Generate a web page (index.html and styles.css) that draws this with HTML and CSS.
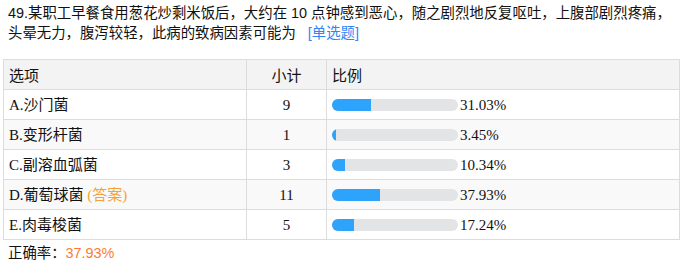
FILE: index.html
```html
<!DOCTYPE html>
<html lang="zh-CN">
<head>
<meta charset="utf-8">
<link rel="stylesheet" href="styles.css">
</head>
<body>
<div class="question">
  <p class="title">49.某职工早餐食用葱花炒剩米饭后，大约在 10 点钟感到恶心，随之剧烈地反复呕吐，上腹部剧烈疼痛，头晕无力，腹泻较轻，此病的致病因素可能为<span class="qtype">[单选题]</span></p>
  <table class="stats">
    <thead>
      <tr><th class="c-opt">选项</th><th class="c-cnt">小计</th><th class="c-pct">比例</th></tr>
    </thead>
    <tbody>
      <tr><td class="c-opt">A.沙门菌</td><td class="c-cnt">9</td><td class="c-pct"><div class="cell"><div class="bar"><div class="fill" style="width:31.03%"></div></div><span class="pct">31.03%</span></div></td></tr>
      <tr><td class="c-opt">B.变形杆菌</td><td class="c-cnt">1</td><td class="c-pct"><div class="cell"><div class="bar"><div class="fill" style="width:3.45%"></div></div><span class="pct">3.45%</span></div></td></tr>
      <tr><td class="c-opt">C.副溶血弧菌</td><td class="c-cnt">3</td><td class="c-pct"><div class="cell"><div class="bar"><div class="fill" style="width:10.34%"></div></div><span class="pct">10.34%</span></div></td></tr>
      <tr><td class="c-opt">D.葡萄球菌 <span class="answer">(答案)</span></td><td class="c-cnt">11</td><td class="c-pct"><div class="cell"><div class="bar"><div class="fill" style="width:37.93%"></div></div><span class="pct">37.93%</span></div></td></tr>
      <tr><td class="c-opt">E.肉毒梭菌</td><td class="c-cnt">5</td><td class="c-pct"><div class="cell"><div class="bar"><div class="fill" style="width:17.24%"></div></div><span class="pct">17.24%</span></div></td></tr>
    </tbody>
  </table>
  <div class="rate">正确率：<span class="rate-val">37.93%</span></div>
</div>
</body>
</html>
```
FILE: styles.css
```css
html, body {
  margin: 0;
  padding: 0;
  background: #fff;
}
body {
  padding: 3px 5px 0 3px;
  color: #111;
}
.title {
  margin: 0;
  font-family: "Liberation Sans", "Noto Sans CJK SC", sans-serif;
  font-size: 14.4px;
  line-height: 20px;
  padding: 0 0 0 5px;
}
.qtype {
  color: #2f86f4;
  margin-left: 12px;
}
.stats {
  margin-top: 16px;
  width: 677px;
  border-collapse: collapse;
  font-family: "Liberation Serif", "Noto Sans CJK SC", serif;
  font-size: 15px;
  table-layout: fixed;
}
.stats th, .stats td {
  border: 1px solid #dcdcdc;
  height: 29px;
  padding: 0 5px;
  font-weight: normal;
  text-align: left;
  line-height: 18px;
}
.stats thead th {
  background: #f3f3f3;
  font-family: "Noto Sans CJK SC", sans-serif;
}
.stats tbody tr:nth-child(even) td {
  background: #f9f9f9;
}
.stats .c-opt { width: 232px; }
.stats .c-cnt { width: 69px; text-align: center; }
.stats .c-pct { padding-left: 5px; }
.cell {
  display: flex;
  align-items: center;
}
.bar {
  width: 126px;
  height: 12px;
  border-radius: 6px;
  background: #e3e4e6;
  overflow: hidden;
  flex: none;
}
.fill {
  height: 100%;
  background: #2ea3fb;
}
.pct {
  margin-left: 2px;
}
.answer {
  color: #f3a23a;
}
.rate {
  font-family: "Liberation Sans", "Noto Sans CJK SC", sans-serif;
  font-size: 14.4px;
  line-height: 20px;
  padding: 0 0 0 5px;
  margin-top: 3px;
}
.rate-val {
  color: #fb7c36;
}
```
